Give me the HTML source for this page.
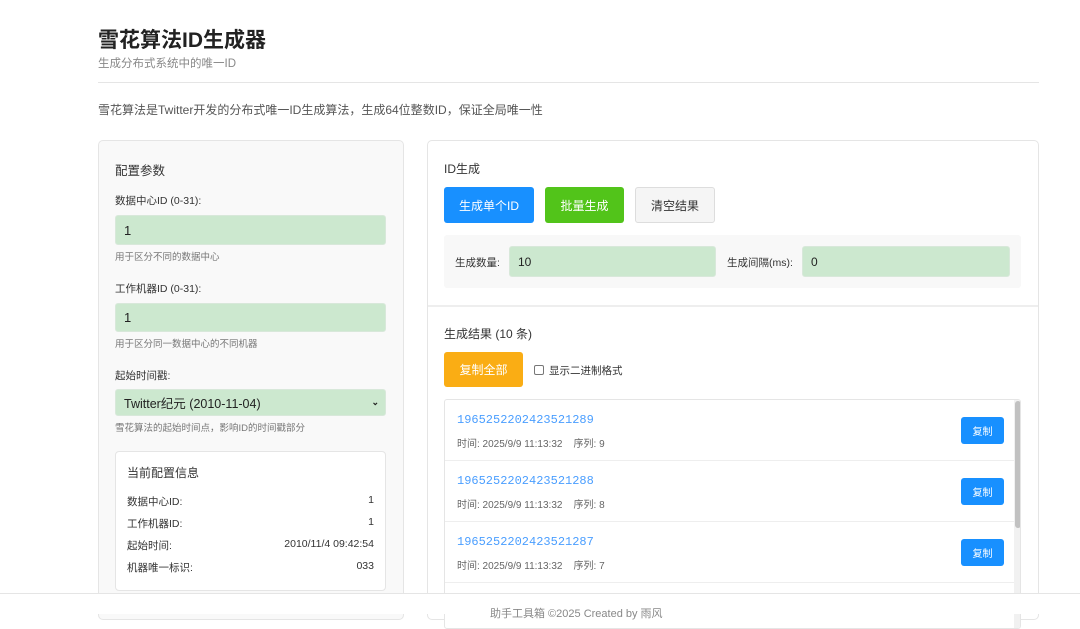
<!DOCTYPE html>
<html><head><meta charset="utf-8"><style>
*{box-sizing:border-box;margin:0;padding:0}
body{width:1080px;height:614px;overflow:hidden;background:#fff;font-family:"Liberation Sans","Noto Sans CJK SC",sans-serif;color:#333;position:relative}
.a{position:absolute;white-space:nowrap}
.inp{position:absolute;background:#cce8cf;border:1px solid #d8e8da;border-radius:3px;font-size:13px;padding-left:8px;display:flex;align-items:center;color:#222}
.btn{position:absolute;border-radius:3px;color:#fff;font-size:12px;display:flex;align-items:center;justify-content:center}
.lbl{font-size:10.5px;color:#333}
.hint{font-size:9.5px;color:#777}
.row{position:absolute;left:0;right:0;height:61px;border-bottom:1px solid #eee}
.id{position:absolute;left:12px;top:13px;font-family:"Liberation Mono",monospace;font-size:12px;color:#4a9eff}
.meta{position:absolute;left:12px;top:35px;font-size:10px;color:#666}
.cp{position:absolute;left:516px;top:17px;width:43px;height:27px;background:#1890ff;border-radius:3px;color:#fff;font-size:10px;display:flex;align-items:center;justify-content:center}
</style></head><body>
<div class="a" style="left:98px;top:24px;font-size:21px;font-weight:bold;color:#222">雪花算法ID生成器</div>
<div class="a" style="left:98px;top:55px;font-size:11.5px;color:#888">生成分布式系统中的唯一ID</div>
<div class="a" style="left:98px;top:82px;width:941px;height:1px;background:#e5e5e5"></div>
<div class="a" style="left:98px;top:101px;font-size:12px;color:#555">雪花算法是Twitter开发的分布式唯一ID生成算法，生成64位整数ID，保证全局唯一性</div>

<div class="a" style="left:98px;top:140px;width:306px;height:480px;background:#f9f9f9;border:1px solid #e5e5e5;border-radius:5px"></div>
<div class="a" style="left:115px;top:160px;font-size:12.5px">配置参数</div>
<div class="a lbl" style="left:115px;top:193px">数据中心ID (0-31):</div>
<div class="inp" style="left:115px;top:215px;width:271px;height:30px">1</div>
<div class="a hint" style="left:115px;top:249px">用于区分不同的数据中心</div>
<div class="a lbl" style="left:115px;top:281px">工作机器ID (0-31):</div>
<div class="inp" style="left:115px;top:303px;width:271px;height:29px">1</div>
<div class="a hint" style="left:115px;top:336px">用于区分同一数据中心的不同机器</div>
<div class="a lbl" style="left:115px;top:368px">起始时间戳:</div>
<div class="inp" style="left:115px;top:389px;width:271px;height:27px;font-size:12.5px">Twitter纪元 (2010-11-04)<span style="position:absolute;right:6px;font-size:9px;font-weight:bold">&#8964;</span></div>
<div class="a hint" style="left:115px;top:420px">雪花算法的起始时间点，影响ID的时间戳部分</div>
<div class="a" style="left:115px;top:451px;width:271px;height:140px;background:#fff;border:1px solid #e5e5e5;border-radius:4px"></div>
<div class="a" style="left:127px;top:464px;font-size:12px">当前配置信息</div>
<div class="a lbl" style="left:127px;top:494px">数据中心ID:</div><div class="a lbl" style="right:706px;top:494px">1</div>
<div class="a lbl" style="left:127px;top:516px">工作机器ID:</div><div class="a lbl" style="right:706px;top:516px">1</div>
<div class="a lbl" style="left:127px;top:538px">起始时间:</div><div class="a lbl" style="right:706px;top:538px">2010/11/4 09:42:54</div>
<div class="a lbl" style="left:127px;top:560px">机器唯一标识:</div><div class="a lbl" style="right:706px;top:560px">033</div>

<div class="a" style="left:427px;top:140px;width:612px;height:480px;background:#fff;border:1px solid #e5e5e5;border-radius:5px"></div>
<div class="a" style="left:444px;top:160px;font-size:12px">ID生成</div>
<div class="btn" style="left:444px;top:187px;width:90px;height:36px;background:#1890ff">生成单个ID</div>
<div class="btn" style="left:545px;top:187px;width:79px;height:36px;background:#52c41a">批量生成</div>
<div class="btn" style="left:635px;top:187px;width:80px;height:36px;background:#f5f5f5;border:1px solid #ddd;color:#333">清空结果</div>
<div class="a" style="left:444px;top:235px;width:577px;height:53px;background:#f8f8f8;border-radius:3px"></div>
<div class="a lbl" style="left:455px;top:255px">生成数量:</div>
<div class="inp" style="left:509px;top:246px;width:207px;height:31px;font-size:12px">10</div>
<div class="a lbl" style="left:727px;top:255px">生成间隔(ms):</div>
<div class="inp" style="left:802px;top:246px;width:208px;height:31px;font-size:12px">0</div>
<div class="a" style="left:428px;top:305px;width:610px;height:2px;background:#eee"></div>
<div class="a" style="left:444px;top:325px;font-size:12px">生成结果 (10 条)</div>
<div class="btn" style="left:444px;top:352px;width:79px;height:35px;background:#faad14">复制全部</div>
<div class="a" style="left:534px;top:365px;width:10px;height:10px;border:1px solid #777;border-radius:2px;background:#fff"></div>
<div class="a" style="left:549px;top:363px;font-size:10.5px">显示二进制格式</div>
<div class="a" style="left:444px;top:399px;width:577px;height:230px;border:1px solid #e5e5e5;border-radius:3px;overflow:hidden;background:#fff">
 <div class="row" style="top:0"><div class="id">1965252202423521289</div><div class="meta">时间: 2025/9/9 11:13:32 &nbsp;&nbsp; 序列: 9</div><div class="cp">复制</div></div>
 <div class="row" style="top:61px"><div class="id">1965252202423521288</div><div class="meta">时间: 2025/9/9 11:13:32 &nbsp;&nbsp; 序列: 8</div><div class="cp">复制</div></div>
 <div class="row" style="top:122px"><div class="id">1965252202423521287</div><div class="meta">时间: 2025/9/9 11:13:32 &nbsp;&nbsp; 序列: 7</div><div class="cp">复制</div></div>
 <div class="a" style="left:569px;top:0;width:8px;height:230px;background:#f1f1f1"></div>
 <div class="a" style="left:570px;top:1px;width:6px;height:127px;background:#c1c1c1;border-radius:3px"></div>
</div>
<div class="a" style="left:0;top:593px;width:1080px;height:21px;background:#fff;border-top:1px solid #e5e5e5"></div>
<div class="a" style="left:490px;top:605px;font-size:11px;color:#888">助手工具箱 ©2025 Created by 雨风</div>
</body></html>
